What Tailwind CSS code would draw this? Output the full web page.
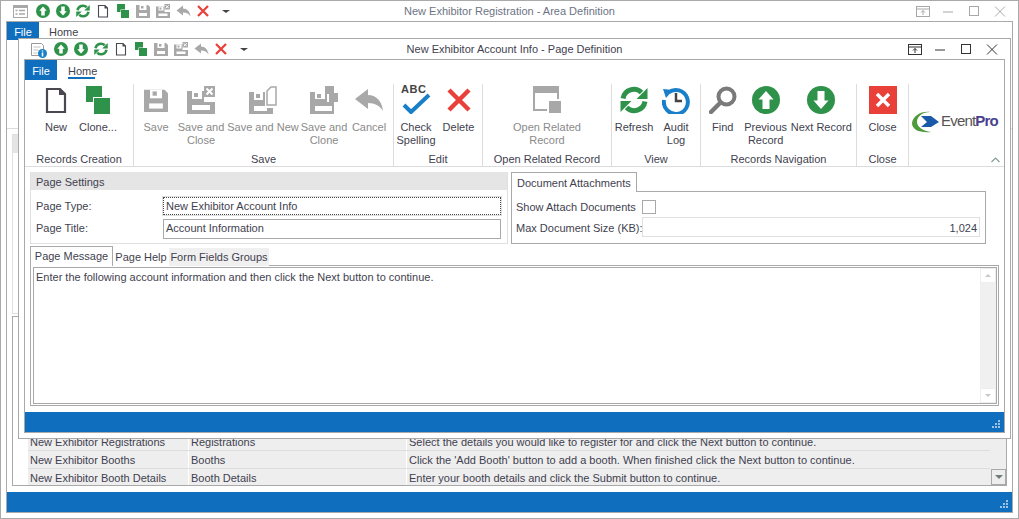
<!DOCTYPE html>
<html lang="en">
<head>
    <meta charset="UTF-8">
    <title>New Exhibitor Account Info - Page Definition</title>
    <script src="https://cdn.jsdelivr.net/npm/@tailwindcss/browser@4"></script>
</head>
<body class="bg-white">
<!-- shared icons, all drawn on a 28 box -->
<svg class="hidden">
    <symbol id="i-up" viewBox="0 0 28 28"><circle cx="14" cy="14" r="14" fill="#2f924a"/><path d="M14 5l7.500 8.500H17.500V23h-7v-9.500H6.500z" fill="#fff"/></symbol>
    <symbol id="i-down" viewBox="0 0 28 28"><circle cx="14" cy="14" r="14" fill="#2f924a"/><path d="M14 23l-7.500-8.500h4V5h7v9.500h4z" fill="#fff"/></symbol>
    <symbol id="i-refresh" viewBox="0 0 28 28"><path d="M3 12.500A11 11 0 0 1 21.500 6.500" fill="none" stroke="#2f924a" stroke-width="5"/><path d="M27.500 2v11h-11z" fill="#2f924a"/><path d="M25 15.500A11 11 0 0 1 6.500 21.500" fill="none" stroke="#2f924a" stroke-width="5"/><path d="M.5 26V15h11z" fill="#2f924a"/></symbol>
    <symbol id="i-doc" viewBox="0 0 28 28"><path d="M5 3h13l5 5v18H5z" fill="#fff" stroke="#4b4750" stroke-width="2.200"/><path d="M17 2l7 7h-7z" fill="#4b4750"/></symbol>
    <symbol id="i-clone" viewBox="0 0 28 28"><rect x="2" y="0" width="16" height="16" fill="#2f924a"/><rect x="9" y="11" width="18" height="17" fill="#fff"/><rect x="10" y="12" width="16" height="16" fill="#2f924a"/></symbol>
    <symbol id="i-save" viewBox="0 0 28 28"><path d="M0 2h24l4 4v22H0z" fill="#a8a8a8"/><rect x="7" y="2" width="14" height="10" fill="#fff"/><rect x="10" y="4" width="5" height="5" fill="#a8a8a8"/><rect x="6" y="18" width="16" height="6" fill="#fff"/></symbol>
    <symbol id="i-saveclose" viewBox="0 0 28 28"><path d="M0 5h17v11h11v12H0z" fill="#a8a8a8"/><rect x="5" y="5" width="10" height="8" fill="#fff"/><rect x="7" y="7" width="4" height="4" fill="#a8a8a8"/><rect x="5" y="19" width="18" height="5" fill="#fff"/><rect x="17" y="0" width="11" height="11" fill="#a8a8a8"/><path d="M19.500 2.500l6 6M25.500 2.500l-6 6" stroke="#fff" stroke-width="2"/></symbol>
    <symbol id="i-savenew" viewBox="0 0 28 28"><path d="M0 6h16v16h8v6H0z" fill="#a8a8a8"/><rect x="5" y="6" width="9" height="8" fill="#fff"/><rect x="7" y="8" width="4" height="4" fill="#a8a8a8"/><rect x="5" y="20" width="13" height="5" fill="#fff"/><path d="M18 5l4-4h5v18h-9z" fill="#fff" stroke="#a8a8a8" stroke-width="1.500"/></symbol>
    <symbol id="i-saveclone" viewBox="0 0 28 28"><path d="M0 6h17v10h7v12H0z" fill="#a8a8a8"/><rect x="5" y="6" width="10" height="7" fill="#fff"/><rect x="7" y="8" width="4" height="4" fill="#a8a8a8"/><rect x="5" y="20" width="17" height="5" fill="#fff"/><rect x="15" y="0" width="9" height="8" fill="#a8a8a8"/><rect x="19" y="7" width="9" height="9" fill="#a8a8a8"/></symbol>
    <symbol id="i-cancel" viewBox="0 0 28 28"><path d="M0 13L13 3v6c8 0 14 6 15 16-3-5-8-8-15-8v6z" fill="#a8a8a8"/></symbol>
    <symbol id="i-x" viewBox="0 0 28 28"><path d="M4 4l20 20M24 4L4 24" stroke="#e9403a" stroke-width="4.500"/></symbol>
</svg>

<div class="w-[1019px] h-[519px] relative overflow-hidden font-['Liberation_Sans',sans-serif] text-[11px] text-[#3f3f4f]">

    <!-- outer window -->
    <div class="h-full border border-[#a9a9a9] flex flex-col">
        <div class="h-5 flex items-center relative shrink-0">
            <svg class="absolute left-[12px] top-[4px] w-[15px] h-[13px]" viewBox="0 0 15 13"><rect x=".5" y=".5" width="14" height="12" fill="none" stroke="#a8a8a8"/><rect x="1" y="1" width="13" height="2" fill="#a8a8a8"/><path d="M2.500 5.500h2M6 5.500h6M2.500 9h2M6 9h6" stroke="#a8a8a8" stroke-width="1.500"/></svg>
            <div class="ml-[35px] flex items-center gap-[6px]">
                <svg class="w-[14px] h-[14px]"><use href="#i-up"/></svg>
                <svg class="w-[14px] h-[14px]"><use href="#i-down"/></svg>
                <svg class="w-[14px] h-[14px]"><use href="#i-refresh"/></svg>
                <svg class="w-[14px] h-[14px]"><use href="#i-doc"/></svg>
                <svg class="w-[14px] h-[14px]"><use href="#i-clone"/></svg>
                <svg class="w-[14px] h-[14px]"><use href="#i-save"/></svg>
                <svg class="w-[14px] h-[14px]"><use href="#i-saveclose"/></svg>
                <svg class="w-[17px] h-[14px] -mx-[1.500px]"><use href="#i-cancel"/></svg>
                <svg class="w-[14px] h-[14px]"><use href="#i-x"/></svg>
                <span class="ml-[6px] w-0 h-0 border-x-[4px] border-x-transparent border-t-[3px] border-t-[#444]"></span>
            </div>
            <div class="absolute inset-x-0 top-[2px] text-center text-[#6c7484]">New Exhibitor Registration - Area Definition</div>
            <svg class="absolute left-[915px] top-[5px] w-[90px] h-[12px]" viewBox="0 0 90 12" fill="none" stroke="#a8a8a8"><rect x=".5" y=".5" width="13" height="10"/><path d="M1 3h12M7 9V4.500M5 6.500l2-2 2 2"/><path d="M27 6h10"/><rect x="53.500" y=".5" width="9" height="9"/><path d="M79 .5l10 10M89 .5l-10 10"/></svg>
        </div>

        <div class="flex-1 mx-[5px] mb-[5px] border border-[#a9a9a9] flex flex-col min-h-0">
            <div class="h-[18px] shrink-0 flex">
                <div class="w-[32px] bg-[#106ebe] text-white text-center leading-[20px]">File</div>
                <div class="ml-[10px] leading-[20px]">Home</div>
            </div>
            <div class="h-[89px] shrink-0 border-b border-[#dcdcdc]"></div>

            <!-- grid behind the dialog -->
            <div class="flex-1 min-h-0 px-[5px] pt-[5px] flex flex-col">
                <div class="h-[180px] shrink-0 border border-[#e0e0e0]">
                    <div class="h-[18px] bg-[#e5e5e5]"></div>
                </div>
                <div class="flex-1 mt-[2px] border border-[#a9a9a9] flex flex-col justify-end pl-[15px] relative min-h-0">
                    <div class="bg-[#eee] pr-[16px]">
                        <div class="h-[18px] flex border-b border-[#ddd]">
                            <div class="w-[161px] pl-[2px] border-r border-white leading-[19px]">New Exhibitor Registrations</div>
                            <div class="w-[218px] pl-[2px] border-r border-white leading-[19px]">Registrations</div>
                            <div class="pl-[2px] whitespace-nowrap leading-[19px]">Select the details you would like to register for and click the Next button to continue.</div>
                        </div>
                        <div class="h-[18px] flex border-b border-[#ddd]">
                            <div class="w-[161px] pl-[2px] border-r border-white leading-[19px]">New Exhibitor Booths</div>
                            <div class="w-[218px] pl-[2px] border-r border-white leading-[19px]">Booths</div>
                            <div class="pl-[2px] whitespace-nowrap leading-[19px]">Click the 'Add Booth' button to add a booth. When finished click the Next button to continue.</div>
                        </div>
                        <div class="h-[16px] flex">
                            <div class="w-[161px] pl-[2px] border-r border-white leading-[19px]">New Exhibitor Booth Details</div>
                            <div class="w-[218px] pl-[2px] border-r border-white leading-[19px]">Booth Details</div>
                            <div class="pl-[2px] whitespace-nowrap leading-[19px]">Enter your booth details and click the Submit button to continue.</div>
                        </div>
                    </div>
                    <div class="absolute right-0 bottom-0 w-[15px] h-[16px] bg-[#eee] border border-[#a9a9a9] flex items-center justify-center">
                        <span class="w-0 h-0 border-x-[4px] border-x-transparent border-t-[4px] border-t-[#6f7f76]"></span>
                    </div>
                </div>
                <div class="h-[6px] shrink-0"></div>
            </div>

            <div class="h-5 shrink-0 bg-[#106ebe] relative">
                <svg class="absolute right-[3px] bottom-[3px] w-[10px] h-[10px]" viewBox="0 0 10 10" fill="#9fc3e4"><rect x="7" y="1" width="2" height="2"/><rect x="4" y="4" width="2" height="2"/><rect x="7" y="4" width="2" height="2"/><rect x="1" y="7" width="2" height="2"/><rect x="4" y="7" width="2" height="2"/><rect x="7" y="7" width="2" height="2"/></svg>
            </div>
        </div>
    </div>

    <!-- dialog on top -->
    <div class="absolute left-[18px] top-[38px] w-[993px] h-[401px] bg-white border border-[#a9a9a9] flex flex-col">
        <div class="h-5 shrink-0 relative flex items-center">
            <svg class="absolute left-[12px] top-[4px] w-[16px] h-[15px]" viewBox="0 0 16 15"><path d="M.5.5h10l2 2v6M.5.5v12h8" fill="none" stroke="#9a9a9a"/><path d="M2.500 4h7M2.500 7h5M2.500 10h4" stroke="#c0c0c0"/><circle cx="11.500" cy="10.500" r="4.500" fill="#1a7fc9"/><path d="M11.500 7.500v1M11.500 9.500v4" stroke="#fff" stroke-width="1.500"/></svg>
            <div class="ml-[35px] flex items-center gap-[6px]">
                <svg class="w-[14px] h-[14px]"><use href="#i-up"/></svg>
                <svg class="w-[14px] h-[14px]"><use href="#i-down"/></svg>
                <svg class="w-[14px] h-[14px]"><use href="#i-refresh"/></svg>
                <svg class="w-[14px] h-[14px]"><use href="#i-doc"/></svg>
                <svg class="w-[14px] h-[14px]"><use href="#i-clone"/></svg>
                <svg class="w-[14px] h-[14px]"><use href="#i-save"/></svg>
                <svg class="w-[14px] h-[14px]"><use href="#i-saveclose"/></svg>
                <svg class="w-[17px] h-[14px] -mx-[1.500px]"><use href="#i-cancel"/></svg>
                <svg class="w-[14px] h-[14px]"><use href="#i-x"/></svg>
                <span class="ml-[6px] w-0 h-0 border-x-[4px] border-x-transparent border-t-[3px] border-t-[#444]"></span>
            </div>
            <div class="absolute inset-x-0 top-[2px] text-center">New Exhibitor Account Info - Page Definition</div>
            <svg class="absolute left-[889px] top-[5px] w-[90px] h-[12px]" viewBox="0 0 90 12" fill="none" stroke="#333"><rect x=".5" y=".5" width="13" height="10"/><path d="M1 3h12M7 9V4.500M5 6.500l2-2 2 2"/><path d="M27 6h10"/><rect x="53.500" y=".5" width="9" height="9"/><path d="M79 .5l10 10M89 .5l-10 10"/></svg>
        </div>

        <div class="flex-1 min-h-0 mx-[5px] mb-[5px] border border-[#a9a9a9] flex flex-col">
            <div class="h-5 shrink-0 flex">
                <div class="w-[32px] bg-[#106ebe] text-white text-center leading-[22px]">File</div>
                <div class="ml-[11px] w-[27px] h-[19px] border-b-2 border-[#106ebe] text-center leading-[22px]">Home</div>
            </div>

            <!-- ribbon -->
            <div class="h-[87px] shrink-0 border-b border-[#dcdcdc] flex relative pt-[4px]">
                <div class="w-[109px] shrink-0 border-r border-[#dcdcdc] flex flex-col">
                    <div class="flex-1 flex pl-[10px]">
                        <div class="w-[42px] flex flex-col items-center leading-[13px]"><svg class="w-7 h-7 mt-[2px] mb-[7px]"><use href="#i-doc"/></svg><span>New</span></div>
                        <div class="w-[42px] flex flex-col items-center leading-[13px] whitespace-nowrap"><svg class="w-7 h-7 mt-[2px] mb-[7px]"><use href="#i-clone"/></svg><span>Clone...</span></div>
                    </div>
                    <div class="text-center leading-[13px]">Records Creation</div>
                </div>
                <div class="w-[260px] shrink-0 border-r border-[#dcdcdc] flex flex-col">
                    <div class="flex-1 flex text-[#8a8a8a] whitespace-nowrap text-center">
                        <div class="w-[44px] flex flex-col items-center leading-[13px]"><svg class="w-6 h-6 mt-[4px] mb-[9px]"><use href="#i-save"/></svg><span>Save</span></div>
                        <div class="w-[46px] flex flex-col items-center leading-[13px]"><svg class="w-7 h-7 mt-[2px] mb-[7px]"><use href="#i-saveclose"/></svg><span>Save and<br>Close</span></div>
                        <div class="w-[78px] flex flex-col items-center leading-[13px]"><svg class="w-7 h-7 mt-[2px] mb-[7px]"><use href="#i-savenew"/></svg><span>Save and New</span></div>
                        <div class="w-[44px] flex flex-col items-center leading-[13px]"><svg class="w-7 h-7 mt-[2px] mb-[7px]"><use href="#i-saveclone"/></svg><span>Save and<br>Clone</span></div>
                        <div class="w-[46px] flex flex-col items-center leading-[13px]"><svg class="w-8 h-7 mt-[2px] mb-[7px]"><use href="#i-cancel"/></svg><span>Cancel</span></div>
                    </div>
                    <div class="text-center leading-[13px]">Save</div>
                </div>
                <div class="w-[89px] shrink-0 border-r border-[#dcdcdc] flex flex-col">
                    <div class="flex-1 flex text-center">
                        <div class="w-[44px] flex flex-col items-center leading-[13px] relative">
                            <svg class="w-[30px] h-7 mt-[2px] mb-[7px]" viewBox="0 0 30 28"><path d="M3 19l7 7L28 9" fill="none" stroke="#1a7fc9" stroke-width="4"/></svg>
                            <span class="absolute left-[7px] top-[-1px] font-bold text-[11px] tracking-[.5px] text-[#444]">ABC</span>
                            <span>Check<br>Spelling</span>
                        </div>
                        <div class="w-[41px] flex flex-col items-center leading-[13px]"><svg class="w-7 h-7 mt-[2px] mb-[7px]"><use href="#i-x"/></svg><span>Delete</span></div>
                    </div>
                    <div class="text-center leading-[13px]">Edit</div>
                </div>
                <div class="w-[129px] shrink-0 border-r border-[#dcdcdc] flex flex-col">
                    <div class="flex-1 flex flex-col items-center leading-[13px] text-center text-[#8a8a8a]">
                        <svg class="w-7 h-7 mt-[2px] mb-[7px]" viewBox="0 0 28 28"><path d="M0 0h26v7H0z" fill="#a8a8a8"/><path d="M1 7v17h13M25 7v6" fill="none" stroke="#a8a8a8" stroke-width="2"/><rect x="16" y="15" width="12" height="12" fill="#a8a8a8"/></svg>
                        <span>Open Related<br>Record</span>
                    </div>
                    <div class="text-center leading-[13px]">Open Related Record</div>
                </div>
                <div class="w-[89px] shrink-0 border-r border-[#dcdcdc] flex flex-col">
                    <div class="flex-1 flex text-center">
                        <div class="w-[44px] flex flex-col items-center leading-[13px]"><svg class="w-7 h-7 mt-[2px] mb-[7px]"><use href="#i-refresh"/></svg><span>Refresh</span></div>
                        <div class="w-[40px] flex flex-col items-center leading-[13px]">
                            <svg class="w-7 h-7 mt-[2px] mb-[7px]" viewBox="0 0 28 28"><path d="M6.500 6.500A12 12 0 1 1 2 14" fill="none" stroke="#1a7fc9" stroke-width="4"/><path d="M1 3l10 1-7 8z" fill="#1a7fc9"/><path d="M14 7v8h6" fill="none" stroke="#444" stroke-width="2.500"/></svg>
                            <span>Audit<br>Log</span>
                        </div>
                    </div>
                    <div class="text-center leading-[13px]">View</div>
                </div>
                <div class="w-[156px] shrink-0 border-r border-[#dcdcdc] flex flex-col">
                    <div class="flex-1 flex text-center whitespace-nowrap">
                        <div class="w-[44px] flex flex-col items-center leading-[13px]">
                            <svg class="w-7 h-7 mt-[2px] mb-[7px]" viewBox="0 0 28 28"><circle cx="17.500" cy="10.500" r="8" fill="none" stroke="#7a7a7a" stroke-width="4"/><path d="M11.500 16.500L2 26" stroke="#7a7a7a" stroke-width="4.500" stroke-linecap="round"/></svg>
                            <span>Find</span>
                        </div>
                        <div class="w-[42px] flex flex-col items-center leading-[13px]"><svg class="w-7 h-7 mt-[2px] mb-[7px]"><use href="#i-up"/></svg><span>Previous<br>Record</span></div>
                        <div class="w-[70px] flex flex-col items-center leading-[13px]"><svg class="w-7 h-7 mt-[2px] mb-[7px]"><use href="#i-down"/></svg><span>Next Record</span></div>
                    </div>
                    <div class="text-center leading-[13px]">Records Navigation</div>
                </div>
                <div class="w-[52px] shrink-0 border-r border-[#dcdcdc] flex flex-col">
                    <div class="flex-1 flex flex-col items-center leading-[13px]">
                        <svg class="w-7 h-7 mt-[2px] mb-[7px]" viewBox="0 0 28 28"><rect width="28" height="28" fill="#e9403a"/><path d="M8 8l12 12M20 8L8 20" stroke="#fff" stroke-width="3.500"/></svg>
                        <span>Close</span>
                    </div>
                    <div class="text-center leading-[13px]">Close</div>
                </div>
                <!-- logo -->
                <div class="flex-1 flex items-start pt-[27px] pl-[2px]">
                    <svg class="w-[30px] h-[22px] shrink-0" viewBox="0 0 30 22"><path d="M1 12C2 5 10 0 19 1 12 1 6 5 6 11c0 5 6 9 14 10C9 22 1 19 1 12z" fill="#4f9a3a"/><path d="M10 5h10l8 6-8 5H10l6-5z" fill="#1b5aa8"/></svg>
                    <span class="text-[15px] leading-[20px] tracking-[-.8px] text-[#555]">Event<span class="font-bold text-[#4a3f8f]">Pro</span></span>
                </div>
                <svg class="absolute right-[4px] bottom-[3px] w-[9px] h-[6px]" viewBox="0 0 9 6"><path d="M.5 5l4-4 4 4" fill="none" stroke="#8a9a9a" stroke-width="1.200"/></svg>
            </div>

            <!-- settings + attachments -->
            <div class="h-[77px] shrink-0 flex pl-[5px] pt-[5px]">
                <div class="w-[478px] h-[72px] shrink-0 border border-t-0 border-[#e0e0e0]">
                    <div class="h-[18px] bg-[#e5e5e5] pl-[5px] leading-[20px]">Page Settings</div>
                    <div class="h-[24px] mt-[4px] flex items-center">
                        <span class="w-[132px] shrink-0 pl-[5px]">Page Type:</span>
                        <div class="w-[338px] h-[18px] border border-dotted border-[#444] outline outline-[#e0e0e0] pl-[2px] leading-[17px] whitespace-nowrap">New Exhibitor Account Info</div>
                    </div>
                    <div class="h-[22px] flex items-center">
                        <span class="w-[132px] shrink-0 pl-[5px] pb-[2px]">Page Title:</span>
                        <div class="w-[338px] h-[20px] border border-[#a9a9a9] pl-[2px] leading-[16px]">Account Information</div>
                    </div>
                </div>
                <div class="ml-[3px] w-[475px] shrink-0 flex flex-col">
                    <div class="w-[126px] h-[20px] border border-b-0 border-[#a9a9a9] pl-[5px] leading-[21px] relative z-10 bg-white -mb-[1px]">Document Attachments</div>
                    <div class="h-[53px] border border-[#a9a9a9] px-[4px] pt-[7px]">
                        <div class="flex items-center h-[15px]">
                            <span class="w-[126px] shrink-0 pt-[2px]">Show Attach Documents</span>
                            <span class="w-[14px] h-[14px] border border-[#a9a9a9]"></span>
                        </div>
                        <div class="flex items-center h-[20px] mt-[3px]">
                            <span class="w-[126px] shrink-0 whitespace-nowrap pt-[2px]">Max Document Size (KB):</span>
                            <div class="w-[338px] h-[20px] border border-[#e0e0e0] text-right pr-[2px] leading-[20px]">1,024</div>
                        </div>
                    </div>
                </div>
            </div>

            <!-- tabs -->
            <div class="flex-1 min-h-0 ml-[5px] mr-[5px] mt-[2px] flex flex-col">
                <div class="h-5 shrink-0 flex items-end relative z-10 -mb-[1px]">
                    <div class="w-[83px] h-5 border border-b-0 border-[#a9a9a9] bg-white text-center leading-[18px]">Page Message</div>
                    <div class="w-[56px] h-[18px] bg-white text-center leading-[18px]">Page Help</div>
                    <div class="w-[100px] h-[18px] bg-[#f0f0f0] text-center leading-[18px] whitespace-nowrap">Form Fields Groups</div>
                </div>
                <div class="flex-1 min-h-0 border border-[#a9a9a9] p-[1px] pl-[2px] mb-[6px]">
                    <div class="h-full border border-[#a9a9a9] flex">
                        <div class="flex-1 pl-[2px] leading-[18px]">Enter the following account information and then click the Next button to continue.</div>
                        <div class="w-[16px] bg-[#f0f0f0] flex flex-col justify-between">
                            <div class="h-[15px] bg-white border border-[#eee] flex items-center justify-center"><span class="w-0 h-0 border-x-[3.500px] border-x-transparent border-b-[3px] border-b-[#c8c8c8]"></span></div>
                            <div class="h-[15px] bg-white border border-[#eee] flex items-center justify-center"><span class="w-0 h-0 border-x-[3.500px] border-x-transparent border-t-[3px] border-t-[#c8c8c8]"></span></div>
                        </div>
                    </div>
                </div>
            </div>

            <div class="h-5 shrink-0 bg-[#106ebe] relative">
                <svg class="absolute right-[3px] bottom-[3px] w-[10px] h-[10px]" viewBox="0 0 10 10" fill="#9fc3e4"><rect x="7" y="1" width="2" height="2"/><rect x="4" y="4" width="2" height="2"/><rect x="7" y="4" width="2" height="2"/><rect x="1" y="7" width="2" height="2"/><rect x="4" y="7" width="2" height="2"/><rect x="7" y="7" width="2" height="2"/></svg>
            </div>
        </div>
    </div>
</div>
</body>
</html>
